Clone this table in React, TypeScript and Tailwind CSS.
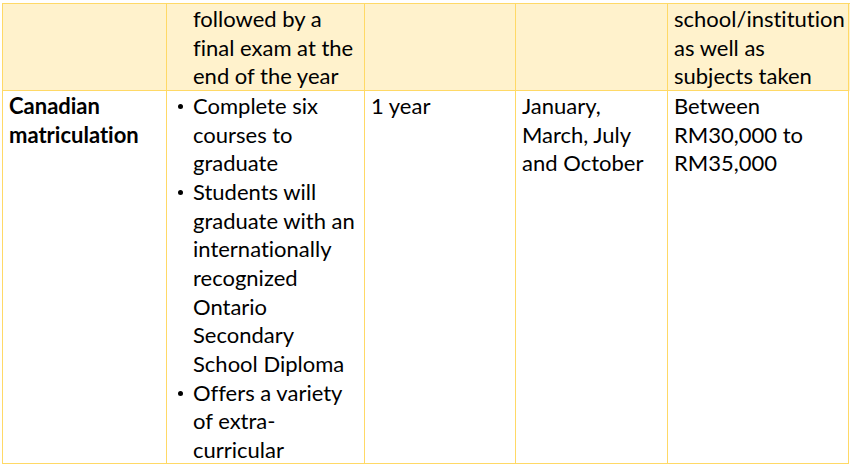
import React from "react";

const Lines = ({ lines, bold }: { lines: string[]; bold?: boolean }) => (
  <div className={bold ? "font-bold" : ""}>
    {lines.map((l, i) => (
      <div key={i} className="whitespace-nowrap">
        {l}
      </div>
    ))}
  </div>
);

const Bullet = ({ lines }: { lines: string[] }) => (
  <div className="relative pl-[26px]">
    <span className="absolute left-[11px] top-[12px] h-[5px] w-[5px] rounded-full bg-black" />
    <Lines lines={lines} />
  </div>
);

const cell = "border-r border-b border-[#FFD966] overflow-hidden";

export default function App() {
  return (
    <div
      className="min-h-[468px] w-[852px] bg-white pt-[3px] pl-[2px] text-[22px] leading-[28.67px] text-black [font-variant-ligatures:none]"
      style={{ fontFamily: "Lato, 'Liberation Sans', sans-serif" }}
    >
      <div className="w-[848px] border-t border-l border-[#FFD966]">
        <div className="grid grid-cols-[164px_198px_151px_152px_181px] bg-[#FFF2CC]">
          <div className={`${cell} h-[87px]`} />
          <div className={`${cell} h-[87px] pt-px pl-[26px]`}>
            <Lines lines={["followed by a", "final exam at the", "end of the year"]} />
          </div>
          <div className={`${cell} h-[87px]`} />
          <div className={`${cell} h-[87px]`} />
          <div className={`${cell} h-[87px] pt-px pl-[6px]`}>
            <Lines lines={["school/institution", "as well as", "subjects taken"]} />
          </div>
        </div>
        <div className="grid grid-cols-[164px_198px_151px_152px_181px]">
          <div className={`${cell} h-[373px] pt-px pl-[6px]`}>
            <Lines bold lines={["Canadian", "matriculation"]} />
          </div>
          <div className={`${cell} h-[373px] pt-px`}>
            <Bullet lines={["Complete six", "courses to", "graduate"]} />
            <Bullet
              lines={[
                "Students will",
                "graduate with an",
                "internationally",
                "recognized",
                "Ontario",
                "Secondary",
                "School Diploma",
              ]}
            />
            <Bullet lines={["Offers a variety", "of extra-", "curricular"]} />
          </div>
          <div className={`${cell} h-[373px] pt-px pl-[6px]`}>
            <Lines lines={["1 year"]} />
          </div>
          <div className={`${cell} h-[373px] pt-px pl-[6px]`}>
            <Lines lines={["January,", "March, July", "and October"]} />
          </div>
          <div className={`${cell} h-[373px] pt-px pl-[6px]`}>
            <Lines lines={["Between", "RM30,000 to", "RM35,000"]} />
          </div>
        </div>
      </div>
    </div>
  );
}
